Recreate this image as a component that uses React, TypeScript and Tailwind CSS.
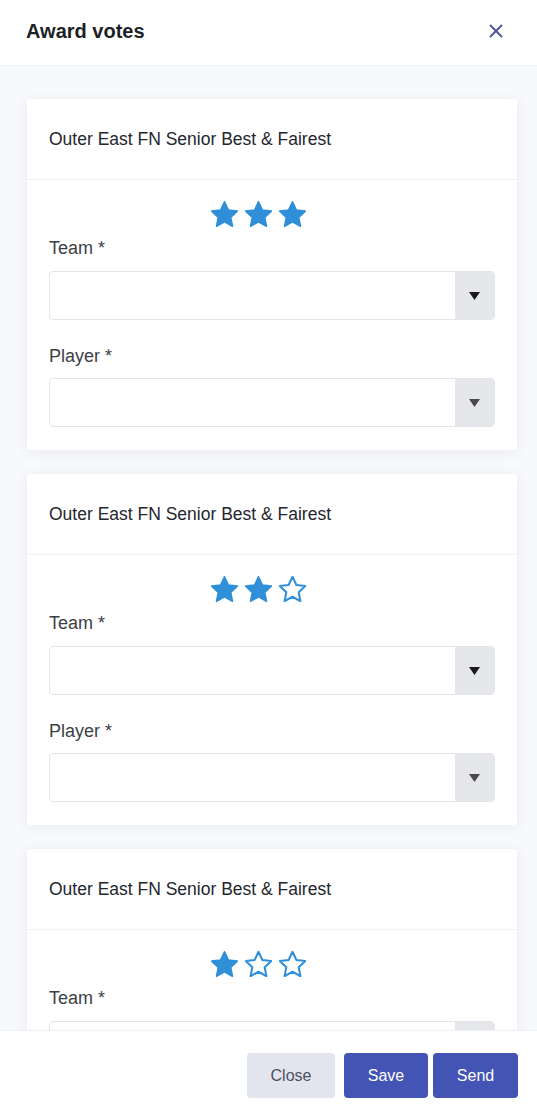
import { X } from 'lucide-react'

const FONT = { fontFamily: '"Liberation Sans", Arial, sans-serif' }

function Star({ filled }: { filled: boolean }) {
  return (
    <svg width="27" height="26" viewBox="2 2 20 19.3" className="shrink-0">
      <path
        d="M12 2.6l2.9 6.1 6.6.8-4.9 4.6 1.3 6.6L12 17.4l-5.9 3.3 1.3-6.6-4.9-4.6 6.6-.8z"
        fill={filled ? '#2f8fd9' : 'none'}
        stroke="#2f8fd9"
        strokeWidth={filled ? 1.2 : 1.5}
        strokeLinejoin="round"
      />
    </svg>
  )
}

function SelectBox({ dark }: { dark?: boolean }) {
  return (
    <div className="flex h-[49px] overflow-hidden rounded-[4px] border border-[#e3e5ea] bg-white">
      <div className="flex-1" />
      <div className="flex w-[39px] items-center justify-center bg-[#e5e7eb]">
        <svg width="11" height="8" viewBox="0 0 11 8">
          <path d="M0 0h11L5.5 8z" fill={dark ? '#1a1a1a' : '#4a4a4a'} />
        </svg>
      </div>
    </div>
  )
}

function VoteCard({ stars }: { stars: number }) {
  return (
    <div className="rounded-[3px] bg-white shadow-[0_2px_14px_rgba(30,40,80,0.07)]">
      <div className="border-b border-[#eef0f3] px-[22px] pt-[30px] pb-[29px] text-[17.5px] leading-[21px] text-[#23262d]">
        Outer East FN Senior Best &amp; Fairest
      </div>
      <div className="px-[22px] pt-[21px] pb-[23px]">
        <div className="flex justify-center gap-[7px] pr-[27px]">
          {[1, 2, 3].map((i) => (
            <Star key={i} filled={i <= stars} />
          ))}
        </div>
        <div className="mt-[11px] text-[18px] leading-5 text-[#3b3f47]">Team *</div>
        <div className="mt-[13px]">
          <SelectBox dark />
        </div>
        <div className="mt-[26px] text-[18px] leading-5 text-[#3b3f47]">Player *</div>
        <div className="mt-[12px]">
          <SelectBox />
        </div>
      </div>
    </div>
  )
}

export default function App() {
  return (
    <div className="flex h-[1104px] flex-col overflow-hidden bg-white" style={FONT}>
      <div className="flex h-[66px] shrink-0 items-center justify-between border-b border-[#eef0f3] pb-[4px] pl-[26px] pr-[30px]">
        <h1 className="text-[20px] font-bold text-[#1c1f26]">Award votes</h1>
        <X size={22} strokeWidth={2} color="#4a519e" />
      </div>

      <div className="flex-1 overflow-hidden bg-[#f8f9fb] pl-[27px] pr-[20px] pt-[33px]">
        <div className="flex flex-col gap-[24px]">
          <VoteCard stars={3} />
          <VoteCard stars={2} />
          <VoteCard stars={1} />
        </div>
      </div>

      <div className="flex h-[74px] shrink-0 items-start justify-end border-t border-[#eef0f3] bg-white pr-[19px] pt-[22px]">
        <button className="h-[45px] w-[88px] rounded-[4px] bg-[#e3e5ee] text-[16px] text-[#4b505e]">Close</button>
        <button className="ml-[9px] h-[45px] w-[84px] rounded-[4px] bg-[#4354b4] text-[16px] text-white">Save</button>
        <button className="ml-[5px] h-[45px] w-[85px] rounded-[4px] bg-[#4354b4] text-[16px] text-white">Send</button>
      </div>
    </div>
  )
}
